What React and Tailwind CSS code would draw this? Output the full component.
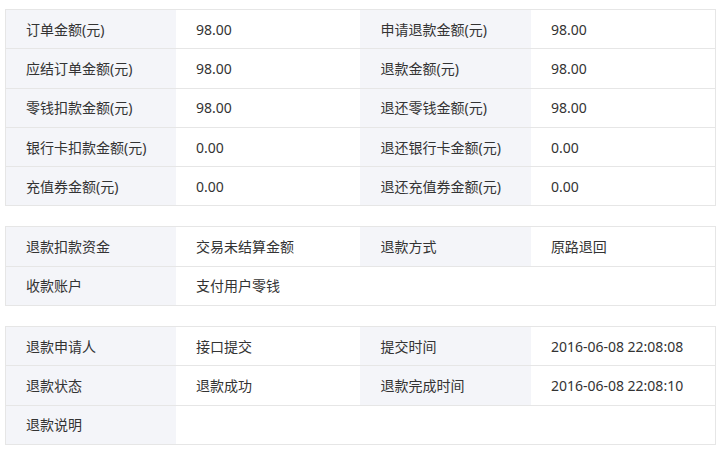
import React from 'react';

const font = { fontFamily: '"Noto Sans", "Noto Sans CJK SC", sans-serif' };

const amountRows = [
  ['订单金额(元)', '98.00', '申请退款金额(元)', '98.00'],
  ['应结订单金额(元)', '98.00', '退款金额(元)', '98.00'],
  ['零钱扣款金额(元)', '98.00', '退还零钱金额(元)', '98.00'],
  ['银行卡扣款金额(元)', '0.00', '退还银行卡金额(元)', '0.00'],
  ['充值券金额(元)', '0.00', '退还充值券金额(元)', '0.00'],
];

const accountRows = [
  ['退款扣款资金', '交易未结算金额', '退款方式', '原路退回'],
  ['收款账户', '支付用户零钱'],
];

const statusRows = [
  ['退款申请人', '接口提交', '提交时间', '2016-06-08 22:08:08'],
  ['退款状态', '退款成功', '退款完成时间', '2016-06-08 22:08:10'],
  ['退款说明', ''],
];

const InfoTable = ({ rows }) => (
  <table className="w-full table-fixed border-collapse border border-[#e6e6e6] text-[14px] text-[#333]">
    <colgroup>
      <col className="w-[24%]" />
      <col className="w-[26%]" />
      <col className="w-[24%]" />
      <col className="w-[26%]" />
    </colgroup>
    <tbody>
      {rows.map((r, i) => (
        <tr key={i} className="h-[39.3px] border-b border-[#e6e6e6] last:border-b-0">
          <td className="bg-[#f4f5f9] pl-5 p-0">{r[0]}</td>
          {r.length === 2 ? (
            <td colSpan={3} className="pl-5 p-0">{r[1]}</td>
          ) : (
            <>
              <td className="pl-5 p-0">{r[1]}</td>
              <td className="bg-[#f4f5f9] pl-5 p-0">{r[2]}</td>
              <td className="pl-5 p-0">{r[3]}</td>
            </>
          )}
        </tr>
      ))}
    </tbody>
  </table>
);

export default function App() {
  return (
    <div className="w-[721px] h-[450px] bg-white pl-[5px] pr-[5px] pt-[9px] flex flex-col gap-[20px]" style={font}>
      <InfoTable rows={amountRows} />
      <InfoTable rows={accountRows} />
      <InfoTable rows={statusRows} />
    </div>
  );
}
